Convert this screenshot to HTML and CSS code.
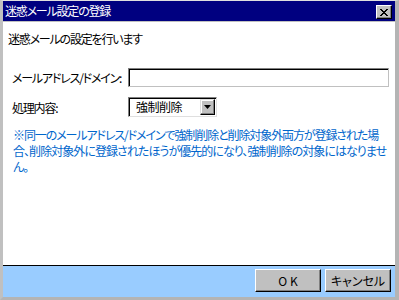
FILE: index.html
```html
<!DOCTYPE html>
<html lang="ja">
<head>
<meta charset="utf-8">
<title>迷惑メール設定の登録</title>
<link rel="stylesheet" href="styles.css">
</head>
<body>
<div class="window">
  <div class="titlebar">
    <span class="title">迷惑メール設定の登録</span>
    <button class="close" type="button" aria-label="閉じる">
      <svg width="8" height="7" viewBox="0 0 8 7"><path d="M0 0h2v1h1v1h2V1h1V0h2v1H7v1H6v1H5v1h1v1h1v1h1v1H6V6H5V5H3v1H2v1H0V6h1V5h1V4h1V3H2V2H1V1H0z" fill="#000"/></svg>
    </button>
  </div>
  <div class="content">
    <p class="intro">迷惑メールの設定を行います</p>
    <div class="form">
      <div class="row">
        <label class="label">メールアドレス/ドメイン:</label>
        <div class="input"></div>
      </div>
      <div class="row">
        <label class="label">処理内容:</label>
        <div class="select">
          <span class="select-text">強制削除</span>
          <span class="select-btn"><svg width="7" height="4" viewBox="0 0 7 4"><path d="M0 0h7L3.5 4z" fill="#000"/></svg></span>
        </div>
      </div>
    </div>
    <p class="note">※同一のメールアドレス/ドメインで強制削除と削除対象外両方が登録された場<br><span class="wide">合、削除対象外に登録されたほうが優先的になり、強制削除の対象にはなりませ</span><br>ん。</p>
  </div>
  <div class="footer">
    <button class="btn" type="button">O K</button>
    <button class="btn" type="button">キャンセル</button>
  </div>
</div>
</body>
</html>
```
FILE: styles.css
```css
html, body {
  margin: 0;
  padding: 0;
  background: #c0c0c0;
}
body {
  font-family: "Noto Sans CJK JP", "Noto Sans", sans-serif;
  font-size: 12px;
  font-feature-settings: "palt";
  letter-spacing: -1.2px;
  color: #000;
}
.window {
  width: 399px;
  height: 300px;
  box-sizing: border-box;
  border-top: 1px solid #dfdfdf;
  border-left: 3px solid #c0c0c0;
  border-right: 4px solid #b4b4b4;
  border-bottom: 3px solid #b4b4b4;
  display: flex;
  flex-direction: column;
  background: #c0c0c0;
}
.titlebar {
  height: 20px;
  background: #000080;
  display: flex;
  align-items: center;
  justify-content: space-between;
  padding: 0 3px 0 2px;
  border-bottom: 1px solid #c0c0c0;
}
.title {
  color: #fff;
  font-size: 12px;
  line-height: 14px;
}
.close {
  width: 16px;
  height: 14px;
  margin-top: 2px;
  padding: 0;
  box-sizing: border-box;
  background: #c0c0c0;
  border: 1px solid;
  border-color: #fff #000 #000 #fff;
  box-shadow: inset -1px -1px 0 #808080;
  display: flex;
  align-items: center;
  justify-content: center;
}
.content {
  background: #fff;
  border-bottom: 1px solid #000;
  padding: 0 0 0 5px;
  box-sizing: border-box;
  height: 244px;
  overflow: hidden;
}
.intro {
  margin: 0;
  padding-top: 10px;
  line-height: 14px;
}
.form {
  margin-top: 22px;
  padding-left: 4px;
  display: flex;
  flex-direction: column;
  gap: 10px;
}
.row {
  display: flex;
  align-items: center;
}
.label {
  width: 116px;
  flex: none;
  white-space: nowrap;
}
.input {
  width: 261px;
  height: 19px;
  box-sizing: border-box;
  border: 1px solid;
  border-color: #808080 #c0c0c0 #c0c0c0 #808080;
  box-shadow: inset 1px 1px 0 #000;
  background: #fff;
}
.select {
  width: 89px;
  height: 20px;
  box-sizing: border-box;
  border: 1px solid;
  border-color: #808080 #dfdfdf #dfdfdf #808080;
  box-shadow: inset 1px 1px 0 #000;
  display: flex;
  align-items: center;
  justify-content: space-between;
  padding: 1px 1px 1px 7px;
  background: #fff;
}
.select-text {
  line-height: 14px;
  letter-spacing: -0.5px;
}
.select-btn {
  width: 15px;
  height: 16px;
  box-sizing: border-box;
  background: #c0c0c0;
  border: 1px solid;
  border-color: #dfdfdf #000 #000 #dfdfdf;
  box-shadow: inset -1px -1px 0 #808080, inset 1px 1px 0 #fff;
  display: flex;
  align-items: center;
  justify-content: center;
}
.note {
  margin: 10px 0 0 5px;
  color: #0066cc;
  line-height: 16px;
  white-space: nowrap;
  letter-spacing: -1.1px;
}
.wide {
  letter-spacing: -0.95px;
}
.footer {
  flex: 1;
  background: #99ccff;
  display: flex;
  justify-content: flex-end;
  align-items: flex-start;
  gap: 4px;
  padding: 3px 4px 0 0;
}
.btn {
  width: 66px;
  height: 23px;
  box-sizing: border-box;
  padding: 0;
  background: #c0c0c0;
  border: 1px solid;
  border-color: #fff #000 #000 #fff;
  box-shadow: inset -1px -1px 0 #808080;
  font-family: inherit;
  font-size: 12px;
  font-feature-settings: "palt";
  letter-spacing: 0;
  color: #000;
}
```
